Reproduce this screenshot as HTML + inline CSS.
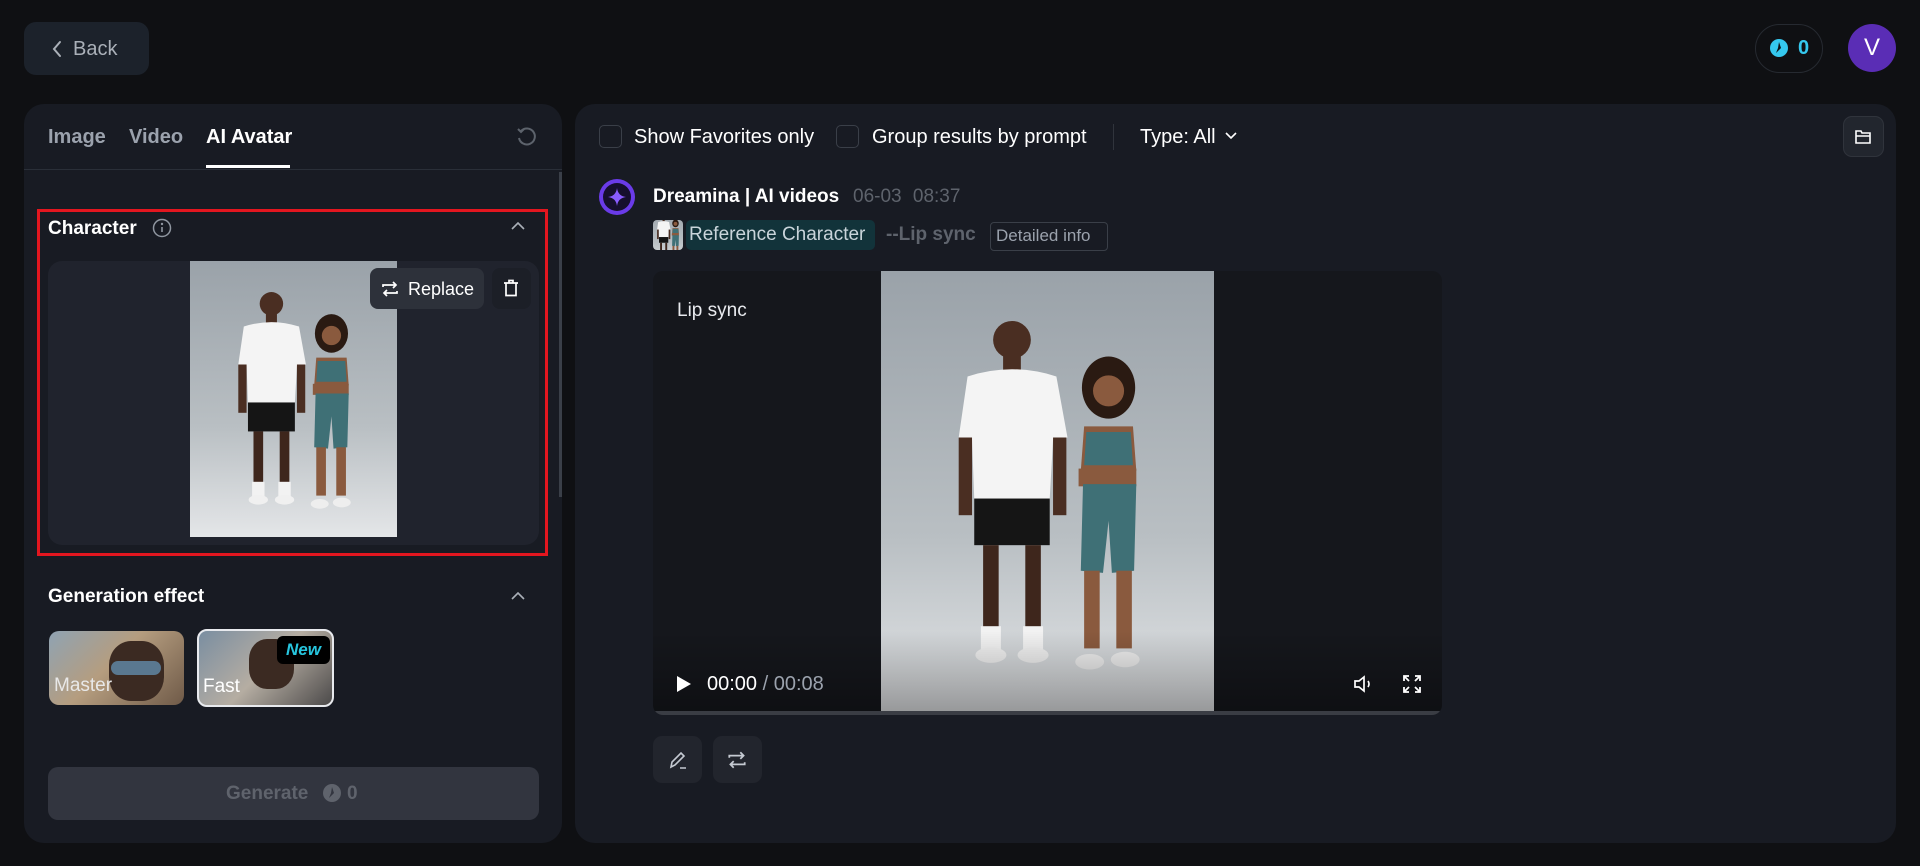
<!DOCTYPE html>
<html><head><meta charset="utf-8"><style>
*{box-sizing:border-box;margin:0;padding:0}
body{width:1920px;height:866px;background:#0f1013;font-family:"Liberation Sans",Arial,sans-serif;color:#e8eaee;position:relative;overflow:hidden}
.abs{position:absolute}
.panel{background:#181b23;border-radius:20px}
.t{position:absolute;white-space:nowrap}
</style></head><body>
<svg width="0" height="0" style="position:absolute"><defs>
<linearGradient id="bg" x1="0" y1="0" x2="0" y2="1"><stop offset="0" stop-color="#9aa2a9"/><stop offset="0.6" stop-color="#b9bfc3"/><stop offset="1" stop-color="#e4e6e8"/></linearGradient>
<symbol id="photo" viewBox="0 0 300 400">
<rect width="300" height="400" fill="url(#bg)"/>
<circle cx="118" cy="62" r="17" fill="#4a2e22"/>
<rect x="110" y="76" width="16" height="14" fill="#4a2e22"/>
<path d="M78 95 Q118 82 158 95 L168 150 L155 152 L152 205 L84 205 L82 152 L70 150 Z" fill="#f4f4f4"/>
<rect x="70" y="150" width="12" height="70" fill="#4a2e22"/><rect x="155" y="150" width="12" height="70" fill="#4a2e22"/>
<rect x="84" y="205" width="68" height="42" fill="#151515"/>
<rect x="92" y="247" width="14" height="90" fill="#3e261c"/><rect x="130" y="247" width="14" height="90" fill="#3e261c"/>
<rect x="90" y="320" width="18" height="24" fill="#f2f2f2"/><rect x="128" y="320" width="18" height="24" fill="#f2f2f2"/>
<ellipse cx="99" cy="346" rx="14" ry="7" fill="#f0f0f0"/><ellipse cx="137" cy="346" rx="14" ry="7" fill="#f0f0f0"/>
<ellipse cx="205" cy="105" rx="24" ry="28" fill="#2a1a12"/>
<circle cx="205" cy="108" r="14" fill="#8a5a3e"/>
<path d="M183 140 L227 140 L230 180 L180 180 Z" fill="#8a5a3e"/>
<path d="M185 145 L225 145 L227 175 L183 175 Z" fill="#3f7076"/>
<rect x="178" y="178" width="52" height="16" fill="#8a5a3e"/>
<path d="M182 192 L230 192 L228 270 L208 272 L205 225 L200 272 L180 270 Z" fill="#3f7076"/>
<rect x="183" y="270" width="14" height="70" fill="#8a5a3e"/><rect x="212" y="270" width="14" height="70" fill="#8a5a3e"/>
<ellipse cx="188" cy="352" rx="13" ry="7" fill="#eee"/><ellipse cx="220" cy="350" rx="13" ry="7" fill="#eee"/>
</symbol>
</defs></svg>

<!-- Back -->
<div class="abs" style="left:24px;top:22px;width:125px;height:53px;background:#1c222b;border-radius:12px"></div>
<svg class="abs" style="left:51px;top:39px" width="12" height="20" viewBox="0 0 12 20"><path d="M9 3 L3 10 L9 17" stroke="#aab0b8" stroke-width="2" fill="none" stroke-linecap="round"/></svg>
<div class="t" style="left:73px;top:38px;font-size:20px;color:#aab0b8">Back</div>

<!-- top right -->
<div class="abs" style="left:1755px;top:24px;width:68px;height:49px;border:1px solid #262a31;border-radius:25px"></div>
<svg class="abs" style="left:1770px;top:39px" width="18" height="18" viewBox="0 0 18 18"><circle cx="9" cy="9" r="9" fill="#35c8ee"/><path d="M9 3 L11 9 L6 14 L8 9 Z" fill="#0f1013"/></svg>
<div class="t" style="left:1798px;top:37px;font-size:20px;font-weight:bold;color:#35c8ee">0</div>
<div class="abs" style="left:1848px;top:24px;width:48px;height:48px;border-radius:50%;background:#5a2db5;color:#fff;font-size:24px;text-align:center;line-height:48px">V</div>

<!-- Left panel -->
<div class="abs panel" style="left:24px;top:104px;width:538px;height:739px"></div>
<div class="t" style="left:48px;top:126px;font-size:20px;color:#9ba2ad;font-weight:bold">Image</div>
<div class="t" style="left:129px;top:126px;font-size:20px;color:#9ba2ad;font-weight:bold">Video</div>
<div class="t" style="left:206px;top:126px;font-size:20px;color:#fff;font-weight:bold">AI Avatar</div>
<div class="abs" style="left:206px;top:165px;width:84px;height:3px;background:#fff"></div>
<div class="abs" style="left:24px;top:169px;width:538px;height:1px;background:#2a2f38"></div>
<svg class="abs" style="left:515px;top:126px" width="22" height="22" viewBox="0 0 22 22"><path d="M6 5 A8 8 0 1 1 4 12" stroke="#5d636c" stroke-width="2" fill="none"/><path d="M3 3 L6 6 L9 3" stroke="#5d636c" stroke-width="2" fill="none"/></svg>
<div class="abs" style="left:559px;top:172px;width:3px;height:325px;background:#3a3f48"></div>

<div class="abs" style="left:37px;top:209px;width:511px;height:347px;border:3px solid #e3161f"></div>
<div class="t" style="left:48px;top:218px;font-size:19px;font-weight:bold;color:#fff">Character</div>
<svg class="abs" style="left:152px;top:218px" width="20" height="20" viewBox="0 0 20 20"><circle cx="10" cy="10" r="8.5" stroke="#8f96a0" stroke-width="1.5" fill="none"/><circle cx="10" cy="6" r="1.2" fill="#8f96a0"/><path d="M10 9 V14" stroke="#8f96a0" stroke-width="1.6"/></svg>
<svg class="abs" style="left:510px;top:220px" width="16" height="12" viewBox="0 0 16 12"><path d="M2 9 L8 3 L14 9" stroke="#aab0b8" stroke-width="1.6" fill="none"/></svg>
<div class="abs" style="left:48px;top:261px;width:491px;height:284px;background:#20232d;border-radius:14px"></div>
<svg class="abs" style="left:190px;top:261px" width="207" height="276" preserveAspectRatio="none"><use href="#photo" width="207" height="276"/></svg>
<div class="abs" style="left:370px;top:268px;width:114px;height:41px;background:#2d313a;border-radius:8px"></div>
<svg class="abs" style="left:380px;top:279px" width="20" height="20" viewBox="0 0 20 20"><path d="M3 8 V6 H16 M13 3 L16 6 L13 9 M17 12 V14 H4 M7 11 L4 14 L7 17" stroke="#fff" stroke-width="1.7" fill="none"/></svg>
<div class="t" style="left:408px;top:279px;font-size:18px;color:#fff">Replace</div>
<div class="abs" style="left:492px;top:268px;width:39px;height:41px;background:#1c1f27;border-radius:8px"></div>
<svg class="abs" style="left:501px;top:278px" width="20" height="20" viewBox="0 0 20 20"><path d="M3 5 H17 M8 5 V2.5 H12 V5 M5 5 V17.5 H15 V5" stroke="#fff" stroke-width="1.7" fill="none"/></svg>

<div class="t" style="left:48px;top:586px;font-size:19px;font-weight:bold;color:#fff">Generation effect</div>
<svg class="abs" style="left:510px;top:590px" width="16" height="12" viewBox="0 0 16 12"><path d="M2 9 L8 3 L14 9" stroke="#aab0b8" stroke-width="1.6" fill="none"/></svg>
<div class="abs" style="left:49px;top:631px;width:135px;height:74px;border-radius:10px;overflow:hidden;background:linear-gradient(135deg,#8fa3b3 0%,#b59d7f 45%,#6f5a48 100%)">
<div class="abs" style="left:60px;top:10px;width:55px;height:60px;border-radius:40%;background:#3b2a22"></div>
<div class="abs" style="left:62px;top:30px;width:50px;height:14px;border-radius:7px;background:#5a7890"></div>
<div class="t" style="left:5px;top:44px;font-size:19px;color:#e8e8e8">Master</div></div>
<div class="abs" style="left:197px;top:629px;width:137px;height:78px;border-radius:10px;overflow:hidden;border:2px solid #e8eaee;background:linear-gradient(135deg,#7a8ea1 0%,#b5ada2 50%,#4c4a4a 100%)">
<div class="abs" style="left:50px;top:8px;width:45px;height:50px;border-radius:40%;background:#3b2a22"></div>
<div class="abs" style="left:78px;top:5px;width:53px;height:28px;border-radius:6px;background:#000;color:#27c6df;font-style:italic;font-weight:bold;font-size:17px;text-align:center;line-height:28px">New</div>
<div class="t" style="left:4px;top:45px;font-size:19px;color:#fff">Fast</div></div>

<div class="abs" style="left:48px;top:767px;width:491px;height:53px;background:#32353f;border-radius:10px"></div>
<div class="t" style="left:226px;top:783px;font-size:19px;font-weight:bold;color:#5f636c">Generate</div>
<svg class="abs" style="left:323px;top:784px" width="18" height="18" viewBox="0 0 18 18"><circle cx="9" cy="9" r="9" fill="#5f636c"/><path d="M9 3 L11 9 L6 14 L8 9 Z" fill="#32353f"/></svg>
<div class="t" style="left:347px;top:783px;font-size:19px;font-weight:bold;color:#5f636c">0</div>

<!-- Right panel -->
<div class="abs panel" style="left:575px;top:104px;width:1321px;height:739px"></div>
<div class="abs" style="left:599px;top:125px;width:23px;height:23px;border:1px solid #3a3f48;border-radius:5px"></div>
<div class="t" style="left:634px;top:126px;font-size:20px;color:#fff">Show Favorites only</div>
<div class="abs" style="left:836px;top:125px;width:23px;height:23px;border:1px solid #3a3f48;border-radius:5px"></div>
<div class="t" style="left:872px;top:126px;font-size:20px;color:#fff">Group results by prompt</div>
<div class="abs" style="left:1113px;top:124px;width:1px;height:26px;background:#30343c"></div>
<div class="t" style="left:1140px;top:126px;font-size:20px;color:#fff">Type: All</div>
<svg class="abs" style="left:1224px;top:131px" width="14" height="10" viewBox="0 0 14 10"><path d="M2 2 L7 7 L12 2" stroke="#fff" stroke-width="1.6" fill="none"/></svg>
<div class="abs" style="left:1843px;top:116px;width:41px;height:41px;background:#22262e;border:1px solid #30343c;border-radius:9px"></div>
<svg class="abs" style="left:1853px;top:127px" width="20" height="20" viewBox="0 0 20 20"><path d="M3 4 H8 L9 6 H17 V16 H3 Z M3 9 H17" stroke="#fff" stroke-width="1.6" fill="none"/></svg>

<div class="abs" style="left:599px;top:179px;width:36px;height:36px;border-radius:50%;background:#6a3be8"></div>
<div class="abs" style="left:603px;top:183px;width:28px;height:28px;border-radius:50%;background:#160f2e"></div>
<svg class="abs" style="left:607px;top:187px" width="20" height="20" viewBox="0 0 20 20"><path d="M10 1 Q11 9 19 10 Q11 11 10 19 Q9 11 1 10 Q9 9 10 1Z" fill="#8a5cff"/></svg>
<div class="t" style="left:653px;top:186px;font-size:19px;font-weight:bold;color:#fff">Dreamina | AI videos</div>
<div class="t" style="left:853px;top:186px;font-size:19px;color:#5e636c;word-spacing:6px">06-03 08:37</div>
<div class="abs" style="left:653px;top:220px;width:30px;height:30px;border-radius:4px;overflow:hidden"><svg width="30" height="30" viewBox="40 40 220 300" preserveAspectRatio="xMidYMid slice"><use href="#photo" width="300" height="400"/></svg></div>
<div class="abs" style="left:686px;top:220px;width:189px;height:30px;background:#12333a;border-radius:5px"></div>
<div class="t" style="left:689px;top:224px;font-size:19px;color:#c9d4da">Reference Character</div>
<div class="t" style="left:886px;top:224px;font-size:19px;color:#5e636c;font-weight:bold">--Lip sync</div>
<div class="abs" style="left:990px;top:222px;width:118px;height:29px;border:1px solid #3a3f48;border-radius:4px"></div>
<div class="t" style="left:996px;top:226px;font-size:17px;color:#9ba2ad">Detailed info</div>

<div class="abs" style="left:653px;top:271px;width:789px;height:444px;background:#15171c;border-radius:10px;overflow:hidden">
<svg class="abs" style="left:227px;top:0" width="335" height="444" preserveAspectRatio="none"><use href="#photo" width="335" height="444"/></svg>
<div class="abs" style="left:0;top:360px;width:789px;height:84px;background:linear-gradient(transparent,rgba(0,0,0,.35))"></div>
<div class="abs" style="left:0;top:440px;width:789px;height:4px;background:#3a3d44"></div>
</div>
<div class="t" style="left:677px;top:300px;font-size:19px;color:#e8eaee">Lip sync</div>
<svg class="abs" style="left:675px;top:674px" width="18" height="20" viewBox="0 0 18 20"><path d="M2 2 L16 10 L2 18 Z" fill="#fff"/></svg>
<div class="t" style="left:707px;top:673px;font-size:20px;color:#fff">00:00 <span style="color:#9ba2ad">/ 00:08</span></div>
<svg class="abs" style="left:1352px;top:673px" width="24" height="22" viewBox="0 0 24 22"><path d="M3 8 H7 L12 4 V18 L7 14 H3 Z" stroke="#fff" stroke-width="1.7" fill="none"/><path d="M16 8 Q18 11 16 14" stroke="#fff" stroke-width="1.7" fill="none"/></svg>
<svg class="abs" style="left:1401px;top:673px" width="22" height="22" viewBox="0 0 22 22"><path d="M3 8 V3 H8 M3 3 L8 8 M14 3 H19 V8 M19 3 L14 8 M3 14 V19 H8 M3 19 L8 14 M19 14 V19 H14 M19 19 L14 14" stroke="#fff" stroke-width="1.8" fill="none"/></svg>

<div class="abs" style="left:653px;top:736px;width:49px;height:47px;background:#22252d;border-radius:9px"></div>
<svg class="abs" style="left:666px;top:748px" width="24" height="24" viewBox="0 0 24 24"><path d="M5 19 L6 14 L15 5 L18 8 L9 17 Z M14 20 H20" stroke="#c5cad2" stroke-width="1.6" fill="none"/></svg>
<div class="abs" style="left:713px;top:736px;width:49px;height:47px;background:#22252d;border-radius:9px"></div>
<svg class="abs" style="left:726px;top:749px" width="22" height="22" viewBox="0 0 20 20"><path d="M3 8 V6 H16 M13 3 L16 6 L13 9 M17 12 V14 H4 M7 11 L4 14 L7 17" stroke="#c5cad2" stroke-width="1.6" fill="none"/></svg>
</body></html>
